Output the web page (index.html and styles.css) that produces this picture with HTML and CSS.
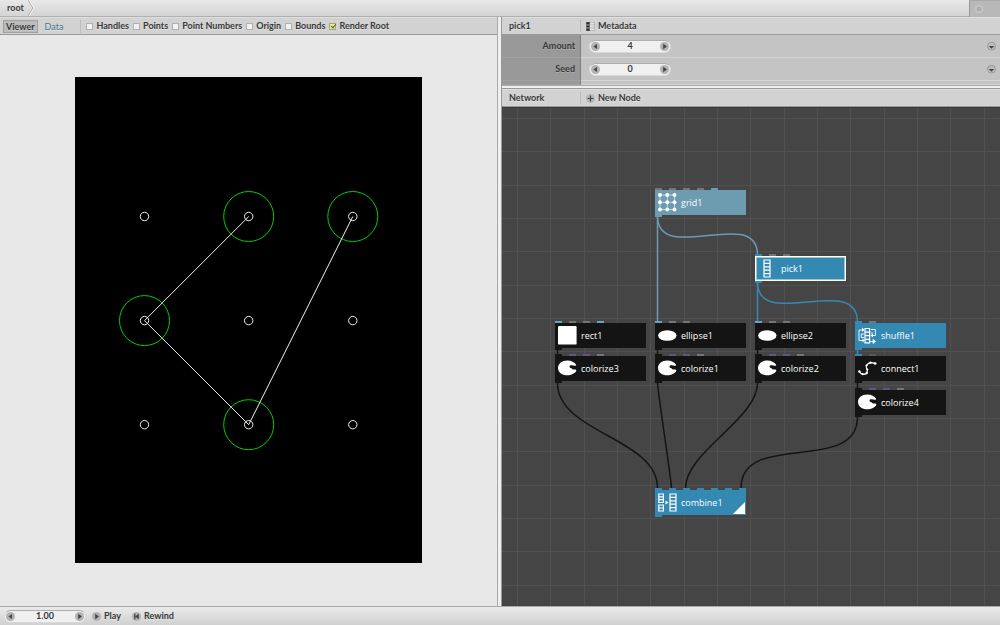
FILE: index.html
```html
<!DOCTYPE html>
<html lang="en">
<head>
<meta charset="utf-8">
<title>root</title>
<link rel="stylesheet" href="styles.css">
</head>
<body>
<svg class="defs" aria-hidden="true">
  <symbol id="i-left" viewBox="0 0 9 9"><circle cx="4.5" cy="4.5" r="4.5" fill="#b2b2b2"/><path d="M6 2v5L2.500 4.500z" fill="#444"/></symbol>
  <symbol id="i-right" viewBox="0 0 9 9"><circle cx="4.500" cy="4.500" r="4.500" fill="#b2b2b2"/><path d="M3.200 1.800v5.400L6.900 4.500z" fill="#444"/></symbol>
  <symbol id="i-rewind" viewBox="0 0 9 9"><circle cx="4.500" cy="4.500" r="4.500" fill="#b2b2b2"/><path d="M2.200 1.800h1.300v2.400L6.800 1.800v5.400L3.500 4.800v2.400H2.200z" fill="#444"/></symbol>
  <symbol id="i-plus" viewBox="0 0 9 9"><circle cx="4.500" cy="4.500" r="4.500" fill="#b6b6b6"/><path d="M4.500 1.500v6M1.500 4.500h6" stroke="#444" stroke-width="1.200"/></symbol>
  <symbol id="i-meta" viewBox="0 0 9 9"><path d="M4 .3h4.700v8.400H4M4 3h4.700M4 6h4.700" fill="#e4e4e4" stroke="#a4a4a4" stroke-width=".7"/><path d="M0 0h4v9H0z" fill="#5a5a5a"/><path d="M1 1.500h2M1 4.500h2M1 7.500h2" stroke="#222" stroke-width="1.500"/><path d="M0 3h4M0 6h4" stroke="#c8c8c8" stroke-width=".6"/></symbol>
  <symbol id="i-menu" viewBox="0 0 9 9"><circle cx="4.500" cy="4.900" r="4.100" fill="#dadada"/><circle cx="4.500" cy="4.300" r="4" fill="#bdbdbd" stroke="#8c8c8c" stroke-width=".8"/><path d="M1.800 4h5.400L4.500 6.700z" fill="#444"/></symbol>
  <symbol id="n-grid" viewBox="0 0 19 19"><path d="M2 2h14.500v14.500H2zM9.300 2v14.500M2 9.300h14.500" fill="none" stroke="#fff" stroke-opacity=".75" stroke-width=".8"/><g fill="#fff"><circle cx="2" cy="2" r="2"/><circle cx="9.300" cy="2" r="2"/><circle cx="16.500" cy="2" r="2"/><circle cx="2" cy="9.300" r="2"/><circle cx="9.300" cy="9.300" r="2"/><circle cx="16.500" cy="9.300" r="2"/><circle cx="2" cy="16.500" r="2"/><circle cx="9.300" cy="16.500" r="2"/><circle cx="16.500" cy="16.500" r="2"/></g></symbol>
  <symbol id="n-pick" viewBox="0 0 19 19"><path d="M6 1h6v17H6zM6 4.400h6M6 7.800h6M6 11.200h6M6 14.600h6" fill="none" stroke="#fff" stroke-width="1.200"/></symbol>
  <symbol id="n-rect" viewBox="0 0 19 19"><rect width="18.600" height="18.600" rx="1.200" fill="#fff"/></symbol>
  <symbol id="n-ellipse" viewBox="0 0 19 19"><ellipse cx="9.300" cy="9.500" rx="9.200" ry="5.300" fill="#fff"/></symbol>
  <symbol id="n-colorize" viewBox="0 0 19 19"><path d="M9.300 1.500C4 1.500 0 4.700 0 8.900s4 7.400 9.300 7.400c4.200 0 7.900-1.900 9-4.500.3-.9-.6-1.200-1.800-1.200-1.700 0-2.600-.5-3-1.300-1.200-.3-2.100-1-2-1.900.1-1 1.300-1.500 2.500-1.100.9.300 1.600.5 2.400.5 1.300 0 2-.2 1.700-1C16.500 3.300 13.300 1.500 9.300 1.500z" fill="#fff"/></symbol>
  <symbol id="n-shuffle" viewBox="0 0 19 19"><g fill="none" stroke="#fff"><path d="M7 2.500h4.600v14.400H7zM7 6.100h4.600M7 9.700h4.600M7 13.300h4.600" stroke-width="1.200"/><path d="M5.500 4H1v10.500h4M6 8H3.300v3.500H6M13 3.500h4.400v6H14M12.500 7h2.500" stroke-width=".9"/></g><path d="M4 1.500L6.500 4 4 6zM4.500 12.500L6.700 14.500l-2.200 2zM15 7.500v4l-2.500-2z" fill="#fff"/><path d="M12 15.500h4.500M15 13.500l2.500 2-2.500 2z" fill="#fff" stroke="#fff" stroke-width=".8"/></symbol>
  <symbol id="n-connect" viewBox="0 0 19 19"><path d="M1.300 12.500C3 16 8 16 9 13.500s.5-3-.5-4.500 1-5.500 5-5.300l3.800.8" fill="none" stroke="#fff" stroke-width="1.300"/><g fill="#fff"><circle cx="1.400" cy="12.500" r="1.200"/><circle cx="4.500" cy="15.200" r="1.100"/><circle cx="8.700" cy="14" r="1.200"/><circle cx="9.300" cy="10.500" r="1.100"/><circle cx="8.500" cy="6.500" r="1.100"/><circle cx="12.500" cy="3.700" r="1.200"/><circle cx="17.200" cy="4.500" r="1.300"/></g></symbol>
  <symbol id="n-combine" viewBox="0 0 19 19"><g fill="none" stroke="#fff" stroke-width="1.200"><path d="M.8 1h4.600v8.500H.8zM.8 3.800h4.600M.8 6.600h4.600M.8 12h4.600v6H.8zM.8 15h4.600M12 1h6v17h-6zM12 4.400h6M12 7.800h6M12 11.200h6M12 14.600h6"/></g><path d="M7.500 7.500L10.500 9.500l-3 2z" fill="#fff"/></symbol>
</svg>
<div class="app">
  <header class="topbar">
    <nav class="crumbs">
      <a class="crumb" href="#">root</a>
      <svg class="chevron" viewBox="0 0 6 16"><path d="M0 0l5 8-5 8" fill="none" stroke="#a6a6a6"/><path d="M1 0l5 8-5 8" fill="none" stroke="#f6f6f6"/></svg>
    </nav>
    <button class="stop" aria-label="Stop"><svg viewBox="0 0 10 10"><circle cx="5" cy="5" r="4.600" fill="#c2c2c2"/><path d="M3 3h4v4H3z" fill="#adadad"/></svg></button>
  </header>

  <main class="panes">
    <section class="viewer-pane">
      <div class="bar viewer-bar">
        <button class="tab active">Viewer</button>
        <button class="tab">Data</button>
        <div class="options">
          <label><input type="checkbox">Handles</label>
          <label><input type="checkbox">Points</label>
          <label><input type="checkbox">Point Numbers</label>
          <label><input type="checkbox">Origin</label>
          <label><input type="checkbox">Bounds</label>
          <label><input type="checkbox" checked>Render Root</label>
        </div>
      </div>
      <div class="viewer">
        <svg class="drawing" width="347" height="486" viewBox="0 0 347 486">
          <rect width="347" height="486"/>
          <g fill="none" stroke="#00d000">
            <circle cx="173.700" cy="139.500" r="25"/><circle cx="277.800" cy="139.500" r="25"/>
            <circle cx="69.500" cy="243.600" r="25"/><circle cx="173.700" cy="347.700" r="25"/>
          </g>
          <g fill="none" stroke="#f0f0f0">
            <circle cx="69.500" cy="139.500" r="4.200"/><circle cx="173.700" cy="139.500" r="4.200"/><circle cx="277.800" cy="139.500" r="4.200"/>
            <circle cx="69.500" cy="243.600" r="4.200"/><circle cx="173.700" cy="243.600" r="4.200"/><circle cx="277.800" cy="243.600" r="4.200"/>
            <circle cx="69.500" cy="347.700" r="4.200"/><circle cx="173.700" cy="347.700" r="4.200"/><circle cx="277.800" cy="347.700" r="4.200"/>
            <path d="M173.700 139.500L69.500 243.600l104.200 104.100L277.800 139.500"/>
          </g>
        </svg>
      </div>
    </section>

    <div class="splitter"></div>

    <section class="right-pane">
      <div class="bar side-bar">
        <span class="bar-title">pick1</span>
        <button class="action"><svg><use href="#i-meta"/></svg>Metadata</button>
      </div>
      <div class="params">
        <div class="param">
          <label for="amount">Amount</label>
          <div class="field">
            <div class="spinner"><button aria-label="Less"><svg><use href="#i-left"/></svg></button><input id="amount" type="text" value="4"><button aria-label="More"><svg><use href="#i-right"/></svg></button></div>
            <button class="menu" aria-label="Amount menu"><svg><use href="#i-menu"/></svg></button>
          </div>
        </div>
        <div class="param">
          <label for="seed">Seed</label>
          <div class="field">
            <div class="spinner"><button aria-label="Less"><svg><use href="#i-left"/></svg></button><input id="seed" type="text" value="0"><button aria-label="More"><svg><use href="#i-right"/></svg></button></div>
            <button class="menu" aria-label="Seed menu"><svg><use href="#i-menu"/></svg></button>
          </div>
        </div>
        <div class="param rest"><span></span><span class="field"></span></div>
      </div>
      <div class="divider"></div>
      <div class="bar side-bar">
        <span class="bar-title">Network</span>
        <button class="action"><svg><use href="#i-plus"/></svg>New Node</button>
      </div>
      <div class="network">
        <svg class="links">
          <g class="link-point"><path d="M155.500 109V215"/><path d="M155.500 109C155.500 159 255.500 98 255.500 148"/></g>
          <g class="link-list"><path d="M255.500 175V215"/><path d="M255.500 175C255.500 225 355.500 165 355.500 215"/><path d="M355.500 241V249"/></g>
          <g class="link-shape">
            <path d="M55.500 241V250M155.500 241V250M255.500 241V250M355.500 275V284"/>
            <path d="M55.500 276C55.500 326 155.500 331 155.500 381"/>
            <path d="M155.500 276C155.500 283 169.500 374 169.500 381"/>
            <path d="M255.500 276C255.500 312 183.500 345 183.500 381"/>
            <path d="M355.500 310C355.500 368 239 323 239 381"/>
          </g>
        </svg>
        <div class="node point" style="left:153px;top:83px"><span class="ports"><i class="gray"></i><i class="gray"></i><i class="gray"></i><i class="gray"></i><i></i></span><svg><use href="#n-grid"/></svg>grid1</div>
        <div class="node list selected" style="left:253px;top:149px"><span class="ports"><i></i><i class="gray"></i><i class="gray"></i></span><svg><use href="#n-pick"/></svg>pick1</div>
        <div class="node" style="left:53px;top:216px"><span class="ports"><i class="blue"></i><i class="gray"></i><i class="gray"></i><i class="blue"></i></span><svg><use href="#n-rect"/></svg>rect1</div>
        <div class="node" style="left:153px;top:216px"><span class="ports"><i class="blue"></i><i class="gray"></i><i class="gray"></i></span><svg><use href="#n-ellipse"/></svg>ellipse1</div>
        <div class="node" style="left:253px;top:216px"><span class="ports"><i class="blue"></i><i class="gray"></i><i class="gray"></i></span><svg><use href="#n-ellipse"/></svg>ellipse2</div>
        <div class="node list" style="left:353px;top:216px"><span class="ports"><i></i><i class="gray"></i></span><svg><use href="#n-shuffle"/></svg>shuffle1</div>
        <div class="node" style="left:53px;top:249px"><span class="ports"><i></i><i class="purple"></i><i class="purple"></i><i class="gray"></i></span><svg><use href="#n-colorize"/></svg>colorize3</div>
        <div class="node" style="left:153px;top:249px"><span class="ports"><i></i><i class="purple"></i><i class="purple"></i><i class="gray"></i></span><svg><use href="#n-colorize"/></svg>colorize1</div>
        <div class="node" style="left:253px;top:249px"><span class="ports"><i></i><i class="purple"></i><i class="purple"></i><i class="gray"></i></span><svg><use href="#n-colorize"/></svg>colorize2</div>
        <div class="node" style="left:353px;top:249px"><span class="ports"><i class="deep"></i><i class="dim"></i></span><svg><use href="#n-connect"/></svg>connect1</div>
        <div class="node" style="left:353px;top:283px"><span class="ports"><i></i><i class="purple"></i><i class="purple"></i><i class="gray"></i></span><svg><use href="#n-colorize"/></svg>colorize4</div>
        <div class="node list rendered" style="left:153px;top:383px"><span class="ports"><i></i><i></i><i></i><i></i><i></i><i></i><i></i></span><svg><use href="#n-combine"/></svg>combine1</div>
      </div>
    </section>
  </main>

  <footer class="playbar">
    <div class="spinner"><button aria-label="Previous frame"><svg><use href="#i-left"/></svg></button><input type="text" value="1.00" aria-label="Frame"><button aria-label="Next frame"><svg><use href="#i-right"/></svg></button></div>
    <button class="action"><svg><use href="#i-right"/></svg>Play</button>
    <button class="action"><svg><use href="#i-rewind"/></svg>Rewind</button>
  </footer>
</div>
</body>
</html>
```
FILE: styles.css
```css
* { box-sizing: border-box; }

body {
  margin: 0;
  font: bold 9px/12px Lato, "Open Sans", sans-serif;
  color: #383838;
  text-shadow: 0 1px 0 #e4e4e4;
}

button, input {
  margin: 0;
  padding: 0;
  border: 0;
  background: none;
  font: inherit;
  color: inherit;
  text-shadow: inherit;
}

svg { display: block; flex: none; }
.defs { position: absolute; width: 0; height: 0; }

.app {
  display: flex;
  flex-direction: column;
  height: 100vh;
  background: #e7e7e7;
}

/* Top bar */
.topbar {
  display: flex;
  justify-content: space-between;
  height: 17px;
  flex: none;
  background: linear-gradient(#e8e8e8, #d4d4d4);
  border-bottom: 1px solid #b0b0b0;
}
.crumbs { display: flex; padding-left: 7px; gap: 4px; }
.crumb { color: inherit; text-decoration: none; line-height: 16px; }
.chevron { width: 6px; height: 16px; }
.stop {
  width: 31px;
  height: 17px;
  padding-left: 4px;
  background: #b8b8b8;
  border-left: 1px solid #989898;
  border-top: 1px solid #a8a8a8;
}
.stop svg { width: 10px; height: 10px; }

/* Panes */
.panes {
  flex: 1;
  min-height: 0;
  display: grid;
  grid-template-columns: 1fr 4px 1fr;
}
.viewer-pane, .right-pane {
  display: flex;
  flex-direction: column;
  min-width: 0;
  min-height: 0;
}
.viewer-pane { border-right: 1px solid #ababab; }
.splitter { background: #efefef; border-right: 1px solid #9a9a9a; }

.bar {
  display: flex;
  align-items: center;
  flex: none;
  height: 18px;
  background: #d2d2d2;
  border-top: 1px solid #dedede;
  border-bottom: 1px solid #9a9a9a;
}

.viewer-bar { padding-left: 3px; gap: 4px; }
.tab {
  height: 13px;
  padding: 0 2px;
  line-height: 11px;
  border: 1px solid transparent;
  font-weight: normal;
  color: #4b7489;
}
.tab.active {
  background: #bcbcbc;
  border-color: #a0a0a0;
  font-weight: bold;
  color: #383838;
  text-shadow: 0 1px 0 #cecece;
}
.options {
  display: flex;
  align-items: center;
  gap: 4px;
  height: 13px;
  margin-left: 10px;
  padding-left: 5px;
  border-left: 1px solid #bcbcbc;
  white-space: nowrap;
}
.options label { display: flex; align-items: center; gap: 3px; }
.options input {
  appearance: none;
  width: 7px;
  height: 7px;
  background: #f2f2f2;
  border: 1px solid #b0b0b0;
  position: relative;
}
.options input:checked { background: #e6ee86; border-color: #a4a878; }
.options input:checked::after {
  content: "";
  position: absolute;
  left: 2px;
  top: -1px;
  width: 2px;
  height: 4px;
  border: solid #555;
  border-width: 0 1px 1px 0;
  transform: rotate(40deg);
}

.viewer {
  flex: 1;
  min-height: 0;
  display: flex;
  align-items: center;
  justify-content: center;
  padding-bottom: 1px;
}

/* Right column */
.side-bar { display: grid; grid-template-columns: 79px 1fr; }
.bar-title { padding-left: 7px; border-right: 1px solid #bcbcbc; }
.action { display: flex; align-items: center; gap: 3px; }
.action svg { width: 9px; height: 9px; }
.side-bar .action { padding-left: 5px; }

.params { flex: none; background: #c4c4c4; }
.param {
  display: grid;
  grid-template-columns: 79px 1fr;
  height: 23px;
}
.param > :first-child {
  display: flex;
  align-items: center;
  justify-content: flex-end;
  padding-right: 5px;
  background: #999;
  border-right: 1px solid #808080;
  border-bottom: 1px solid #a2a2a2;
  text-shadow: 0 1px 0 #aaa;
}
.param.rest { height: 4px; }
.field {
  display: flex;
  align-items: center;
  justify-content: space-between;
  padding: 0 4px 0 8px;
  border-bottom: 1px solid #d4d4d4;
}
.menu svg { width: 9px; height: 9px; }

.spinner {
  display: flex;
  align-items: center;
  width: 82px;
  height: 13px;
  padding: 0 1px;
  background: #f0f0f0;
  border: 1px solid #d8d8d8;
  border-top-color: #aeaeae;
  border-radius: 7px;
}
.spinner svg { width: 9px; height: 9px; }
.spinner input {
  flex: 1;
  min-width: 0;
  height: 11px;
  text-align: center;
  text-shadow: none;
  outline: 0;
}

.divider {
  flex: none;
  height: 4px;
  background: #efefef;
  border-top: 1px solid #aaa;
  border-bottom: 1px solid #9a9a9a;
}

/* Network canvas: lines every third of 100px */
.network {
  position: relative;
  flex: 1;
  min-height: 0;
  overflow: hidden;
  background-color: #454545;
  background-image:
    linear-gradient(90deg, #505050 1px, transparent 1px 33px, #505050 33px 34px, transparent 34px 67px, #505050 67px 68px, transparent 68px),
    linear-gradient(#505050 1px, transparent 1px 33px, #505050 33px 34px, transparent 34px 67px, #505050 67px 68px, transparent 68px);
  background-size: 100px 100px;
  background-position: 15px 0, 0 11px;
  box-shadow: inset 0 1px 0 #383838;
}
.links {
  position: absolute;
  width: 100%;
  height: 100%;
  fill: none;
  stroke-width: 1.5px;
}
.link-point { stroke: #6d9bb3; }
.link-list { stroke: #3588b2; }
.link-shape { stroke: #141414; }

.node {
  --fill: #141414;
  position: absolute;
  display: flex;
  align-items: center;
  gap: 4px;
  width: 91px;
  height: 25px;
  padding-left: 3px;
  background: var(--fill);
  color: #fff;
  font-family: "Open Sans", "Noto Sans", sans-serif;
  font-weight: normal;
  text-shadow: none;
}
.node svg { width: 19px; height: 19px; }
.node.point { --fill: #6d9bb0; }
.node.list { --fill: #3489b3; }
.node.selected { box-shadow: inset 0 0 0 1px #fff, inset 0 0 0 2px #9ac4d9; }
.node::after {
  content: "";
  position: absolute;
  left: 0;
  top: 100%;
  width: 7px;
  height: 2px;
  background: var(--fill);
}
.node.rendered::before {
  content: "";
  position: absolute;
  right: 1px;
  bottom: 1px;
  width: 12px;
  height: 12px;
  background: #fff;
  clip-path: polygon(100% 0, 100% 100%, 0 100%);
}
.ports {
  position: absolute;
  left: 0;
  bottom: 100%;
  display: flex;
  gap: 7px;
}
.ports i { width: 7px; height: 2px; background: var(--fill); }
.ports .gray { background: #757575; }
.ports .dim { background: #5a5a5a; }
.ports .blue { background: #6aa3bd; }
.ports .deep { background: #3489b3; }
.ports .purple { background: #62567c; }

/* Footer */
.playbar {
  display: flex;
  align-items: center;
  gap: 6px;
  flex: none;
  height: 19px;
  padding-left: 4px;
  background: linear-gradient(#ebebeb, #d0d0d0);
  border-top: 1px solid #a8a8a8;
}
.playbar .action + .action { margin-left: 5px; }
```
